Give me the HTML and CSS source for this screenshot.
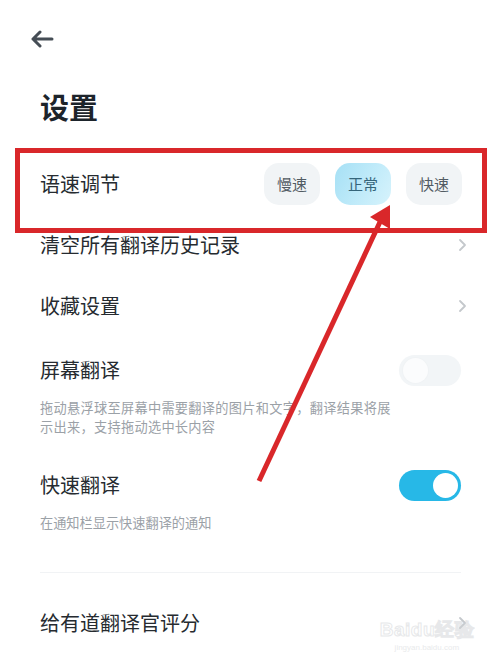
FILE: index.html
```html
<!DOCTYPE html>
<html lang="zh">
<head>
<meta charset="utf-8">
<link rel="stylesheet" href="styles.css">
</head>
<body>
<div class="page">
  <header class="top">
    <svg class="back" width="24" height="18" viewBox="0 0 24 18"><path d="M22 9H3M10 2L3 9l7 7" fill="none" stroke="#454d55" stroke-width="3" stroke-linecap="round" stroke-linejoin="round"/></svg>
  </header>
  <h1 class="title">设置</h1>

  <div class="row">
    <span class="label">语速调节</span>
    <div class="chips">
      <span class="chip">慢速</span>
      <span class="chip active">正常</span>
      <span class="chip">快速</span>
    </div>
  </div>
  <div class="row">
    <span class="label">清空所有翻译历史记录</span>
    <svg class="chev" width="9" height="14" viewBox="0 0 9 14"><path d="M2 2l5 5-5 5" fill="none" stroke="#c4c8cc" stroke-width="1.8" stroke-linecap="round" stroke-linejoin="round"/></svg>
  </div>
  <div class="row">
    <span class="label">收藏设置</span>
    <svg class="chev" width="9" height="14" viewBox="0 0 9 14"><path d="M2 2l5 5-5 5" fill="none" stroke="#c4c8cc" stroke-width="1.8" stroke-linecap="round" stroke-linejoin="round"/></svg>
  </div>

  <div class="switch-item first">
    <div class="switch-row">
      <span class="label">屏幕翻译</span>
      <span class="toggle off"><span class="knob"></span></span>
    </div>
    <p class="desc wide">拖动悬浮球至屏幕中需要翻译的图片和文字，翻译结果将展示出来，支持拖动选中长内容</p>
  </div>

  <div class="switch-item second">
    <div class="switch-row">
      <span class="label">快速翻译</span>
      <span class="toggle on"><span class="knob"></span></span>
    </div>
    <p class="desc">在通知栏显示快速翻译的通知</p>
  </div>

  <div class="divider"></div>

  <div class="row">
    <span class="label">给有道翻译官评分</span>
    <svg class="chev" width="9" height="14" viewBox="0 0 9 14"><path d="M2 2l5 5-5 5" fill="none" stroke="#c4c8cc" stroke-width="1.8" stroke-linecap="round" stroke-linejoin="round"/></svg>
  </div>

  <div class="watermark"><span class="wm-big">Bai<span class="paw">du</span>经验</span><span class="wm-small">jingyan.baidu.com</span></div>

  <svg class="annot" width="500" height="660" viewBox="0 0 500 660">
    <rect x="17.5" y="150.5" width="467" height="80" fill="none" stroke="#d9272a" stroke-width="5"/>
    <line x1="259" y1="481" x2="380" y2="222" stroke="#d9272a" stroke-width="5"/>
    <polygon points="390,205 370,217 390,229" fill="#d9272a"/>
  </svg>
</div>
</body>
</html>
```

FILE: styles.css
```css
* { box-sizing: border-box; }
html, body { margin: 0; padding: 0; background: #ffffff; }
body {
  font-family: "Noto Sans CJK SC", "Noto Sans", sans-serif;
  color: #262b30;
  width: 500px;
  height: 660px;
  overflow: hidden;
}
.page {
  position: relative;
  width: 500px;
  height: 660px;
  padding: 0 39px 0 40px;
}
.top {
  height: 78px;
  display: flex;
  align-items: flex-start;
  padding-top: 30px;
}
.back { margin-left: -10px; }
.title {
  margin: 8px 0 0;
  font-size: 29px;
  font-weight: 700;
  line-height: 40px;
  height: 40px;
  color: #1d242b;
}
.row {
  height: 61px;
  display: flex;
  align-items: center;
  justify-content: space-between;
}
.title + .row { margin-top: 27px; }
.label {
  font-size: 20px;
  line-height: 28px;
  color: #262b30;
}
.chips {
  display: flex;
  gap: 15px;
  margin-right: -1px;
}
.chip {
  width: 56px;
  height: 42px;
  border-radius: 15px;
  background: #f1f4f6;
  display: flex;
  align-items: center;
  justify-content: center;
  font-size: 15px;
  color: #525b63;
}
.chip.active {
  background: linear-gradient(120deg, #a6e0f5 0%, #c3ecfa 60%, #d7f3fc 100%);
  color: #35657a;
}
.chev { margin-right: -6px; }
.switch-item.first { padding-top: 12px; }
.switch-item.second { padding-top: 27px; }
.switch-row {
  height: 44px;
  display: flex;
  align-items: center;
  justify-content: space-between;
}
.toggle {
  width: 62px;
  height: 31px;
  border-radius: 16px;
  position: relative;
  display: block;
}
.toggle.off { background: #f2f5f7; }
.toggle.on { background: #27b8e7; }
.knob {
  position: absolute;
  top: 3px;
  width: 25px;
  height: 25px;
  border-radius: 50%;
  background: #ffffff;
}
.toggle.off .knob { left: 4px; background: #fbfcfd; box-shadow: 0 0 0 1px #f0f3f5; }
.toggle.on .knob { right: 3px; }
.desc {
  margin: 6px 0 0;
  font-size: 13.2px;
  line-height: 19px;
  color: #9ba1a7;
}
.desc.wide { max-width: 362px; letter-spacing: 0.3px; }
.divider {
  margin-top: 40px;
  height: 1px;
  background: #f1f3f5;
}
.divider + .row { margin-top: 19px; }
.watermark {
  position: absolute;
  right: 26px;
  bottom: 8px;
  display: flex;
  flex-direction: column;
  align-items: center;
  opacity: 0.5;
  pointer-events: none;
}
.wm-big {
  font-family: "Liberation Sans", sans-serif;
  font-size: 19px;
  font-weight: 700;
  color: #ffffff;
  -webkit-text-stroke: 1px #d0d3d6;
  letter-spacing: 0.5px;
}
.wm-small {
  font-family: "Liberation Sans", sans-serif;
  font-size: 8px;
  color: #d3d6d9;
}
.annot {
  position: absolute;
  left: 0;
  top: 0;
  pointer-events: none;
}
```
